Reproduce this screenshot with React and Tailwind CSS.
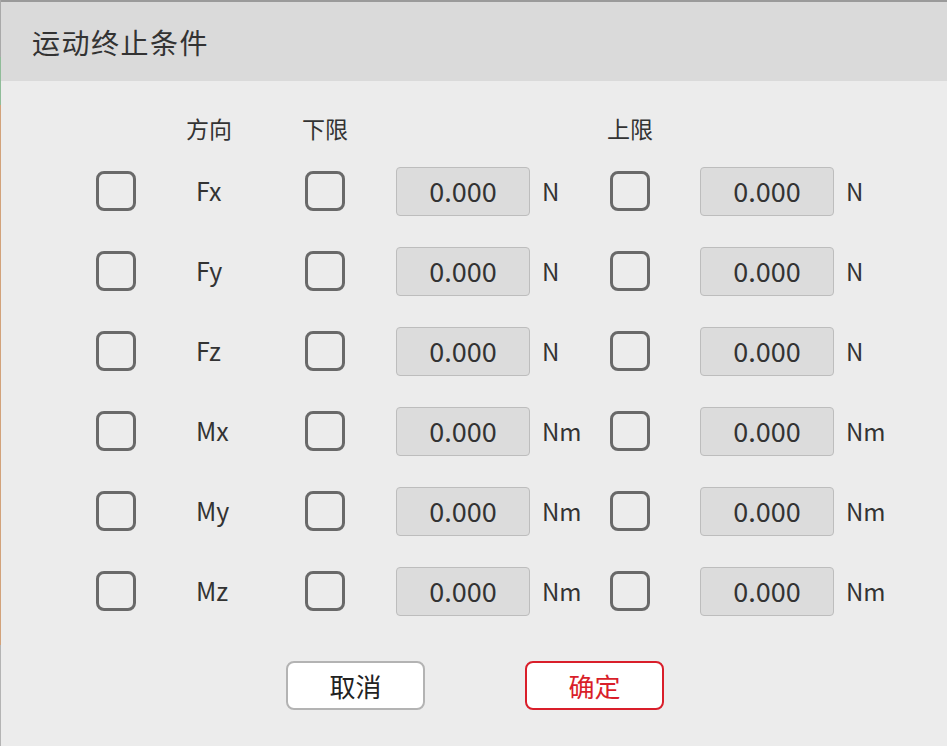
import React from "react";

const rows = [
  { name: "Fx", unit: "N" },
  { name: "Fy", unit: "N" },
  { name: "Fz", unit: "N" },
  { name: "Mx", unit: "Nm" },
  { name: "My", unit: "Nm" },
  { name: "Mz", unit: "Nm" },
];

const font = { fontFamily: '"Noto Sans CJK SC", "Noto Sans", sans-serif' };

function Box() {
  return (
    <div className="w-[40px] h-[40px] shrink-0 rounded-[8px] border-[3px] border-[#696969] bg-[#ececec]" />
  );
}

function Field() {
  return (
    <div className="w-[134px] h-[49px] shrink-0 flex items-center justify-center rounded-[4px] border border-[#bdbdbd] bg-[#dcdcdc] text-[27px] text-[#333]">
      0.000
    </div>
  );
}

export default function App() {
  return (
    <div
      className="w-[947px] h-[746px] flex bg-[#ececec] overflow-hidden"
      style={font}
    >
      {/* thin strip of whatever sits behind the dialog */}
      <div className="w-[1px] h-full flex flex-col shrink-0">
        <div className="h-[57px] bg-[#a9a9a9]" />
        <div className="h-[48px] bg-[#8fbc98]" />
        <div className="h-[540px] bg-[#d2a27a]" />
        <div className="flex-1 bg-[#b4b4b4]" />
      </div>

      <div className="flex-1 flex flex-col border-t-2 border-[#9a9a9a]">
        <div className="h-[79px] flex items-center pl-[31px] bg-[#dadada] text-[28px] tracking-[1.5px] text-[#333]">
          运动终止条件
        </div>

        <div className="pt-[24px]">
          <div className="h-[46px] flex items-center pl-[95px] text-[23px] text-[#333]">
            <div className="w-[40px]" />
            <div className="w-[146px] text-center">方向</div>
            <div className="ml-[23px] w-[40px] flex justify-center whitespace-nowrap">下限</div>
            <div className="ml-[51px] w-[134px]" />
            <div className="ml-[13px] w-[67px]" />
            <div className="w-[40px] flex justify-center whitespace-nowrap">上限</div>
          </div>

          {rows.map((r) => (
            <div key={r.name} className="h-[80px] flex items-center pl-[95px] text-[#333]">
              <Box />
              <div className="w-[146px] pl-[60px] text-[25px]">{r.name}</div>
              <div className="ml-[23px]">
                <Box />
              </div>
              <div className="ml-[51px]">
                <Field />
              </div>
              <div className="ml-[12px] w-[68px] text-[24px]">{r.unit}</div>
              <Box />
              <div className="ml-[50px]">
                <Field />
              </div>
              <div className="ml-[12px] text-[24px]">{r.unit}</div>
            </div>
          ))}

          <div className="mt-[30px] flex pl-[285px] gap-[100px]">
            <button className="w-[139px] h-[49px] rounded-[8px] border-2 border-[#b3b3b3] bg-white text-[26px] text-[#222]">
              取消
            </button>
            <button className="w-[139px] h-[49px] rounded-[8px] border-2 border-[#d91e2a] bg-white text-[26px] text-[#d91e2a]">
              确定
            </button>
          </div>
        </div>
      </div>
    </div>
  );
}
